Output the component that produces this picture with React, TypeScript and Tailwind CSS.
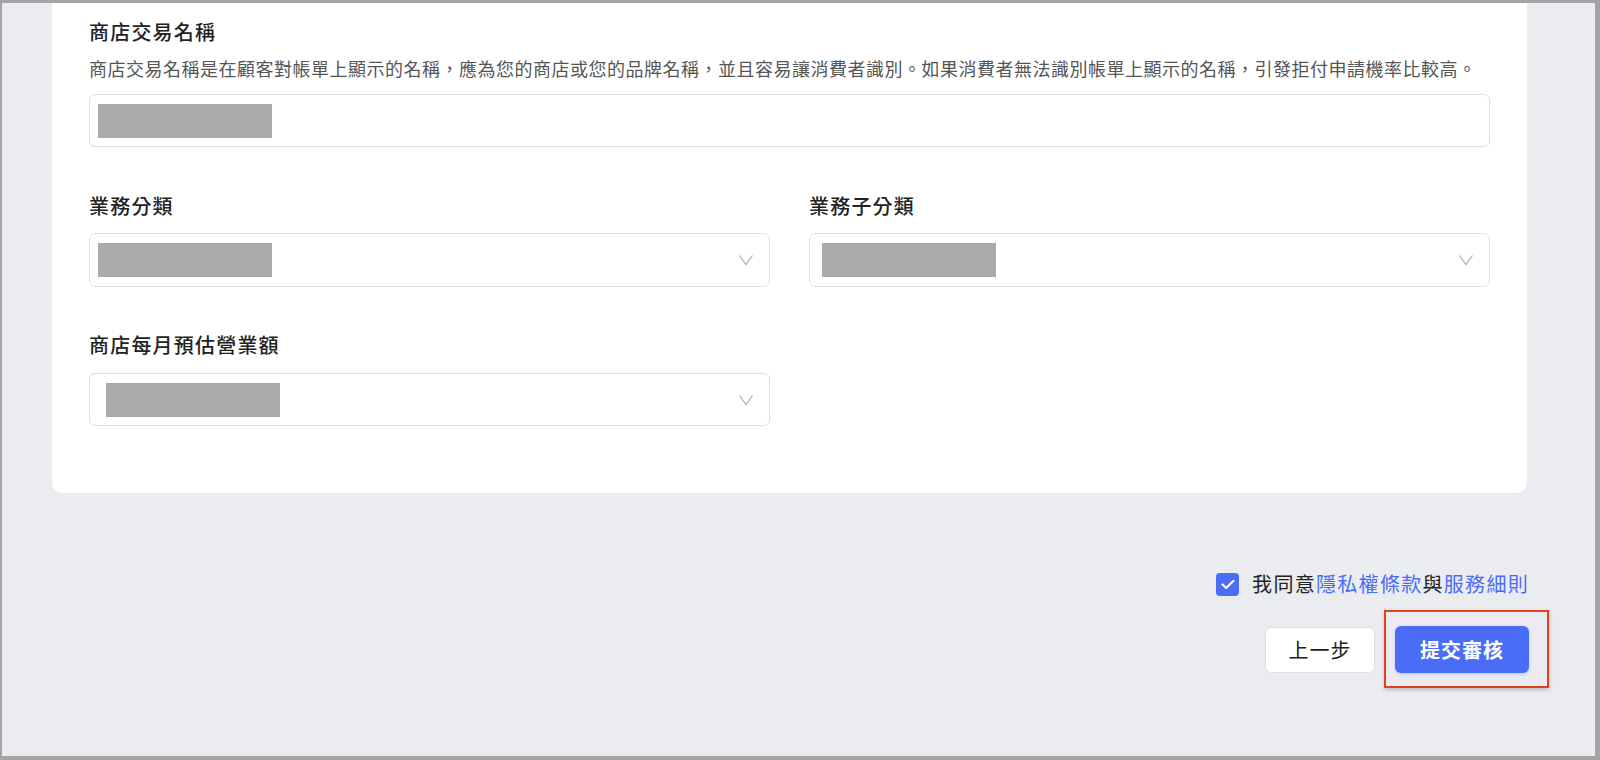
import React from "react";

const FONT = { fontFamily: '"Noto Sans CJK TC", "Noto Sans", sans-serif' };

function Chevron() {
  return (
    <svg width="16" height="12" viewBox="0 0 16 12" fill="none">
      <path d="M1.5 1.5 L8 10.5 L14.5 1.5" stroke="#a3a7b3" strokeWidth="1.1" />
    </svg>
  );
}

function Block() {
  return <div className="h-[34px] w-[174px] bg-[#aaaaaa]" />;
}

export default function App() {
  return (
    <div
      className="w-[1600px] h-[760px] bg-[#a4a4a7] pt-[3px] pl-[2px] pr-[5px] pb-[4px]"
      style={FONT}
    >
      <div className="h-full bg-[#ebecf0] overflow-hidden">
        <div className="ml-[50px] w-[1475px] bg-white rounded-b-[10px] px-[37px] pt-[15px] pb-[67px]">
          <div className="text-[20px] leading-[28px] font-medium tracking-[1.2px] text-[#222222]">
            商店交易名稱
          </div>
          <div className="mt-[8px] text-[18px] leading-[28px] tracking-[0.5px] text-[#555555]">
            商店交易名稱是在顧客對帳單上顯示的名稱，應為您的商店或您的品牌名稱，並且容易讓消費者識別。如果消費者無法識別帳單上顯示的名稱，引發拒付申請機率比較高。
          </div>
          <div className="mt-[12px] h-[53px] border border-[#dcdfe7] rounded-[6px] flex items-center pl-[8px]">
            <Block />
          </div>

          <div className="mt-[45px] grid grid-cols-2 gap-x-[39px]">
            <div>
              <div className="text-[20px] leading-[28px] font-medium tracking-[1.2px] text-[#222222]">
                業務分類
              </div>
              <div className="mt-[13px] h-[54px] border border-[#dcdfe7] rounded-[6px] flex items-center justify-between pr-[15px] pl-[8px]">
                <Block />
                <Chevron />
              </div>
            </div>
            <div>
              <div className="text-[20px] leading-[28px] font-medium tracking-[1.2px] text-[#222222]">
                業務子分類
              </div>
              <div className="mt-[13px] h-[54px] border border-[#dcdfe7] rounded-[6px] flex items-center justify-between pr-[15px] pl-[12px]">
                <Block />
                <Chevron />
              </div>
            </div>
            <div className="mt-[44px]">
              <div className="text-[20px] leading-[28px] font-medium tracking-[1.2px] text-[#222222]">
                商店每月預估營業額
              </div>
              <div className="mt-[14px] h-[53px] border border-[#dcdfe7] rounded-[6px] flex items-center justify-between pr-[15px] pl-[16px]">
                <Block />
                <Chevron />
              </div>
            </div>
          </div>
        </div>

        <div className="ml-[50px] w-[1477px] flex flex-col items-end">
          <div className="mt-[77px] h-[28px] flex items-center gap-[13px]">
            <div className="w-[23px] h-[23px] rounded-[4px] bg-[#4a6cf7] flex items-center justify-center">
              <svg width="14" height="11" viewBox="0 0 14 11" fill="none">
                <path d="M1.5 5.5 L5.2 9 L12.5 1.8" stroke="white" strokeWidth="2.2" strokeLinecap="round" strokeLinejoin="round" />
              </svg>
            </div>
            <div className="text-[20px] leading-[28px] tracking-[1.3px] text-[#222222]">
              我同意<span className="text-[#4a6cf7]">隱私權條款</span>與<span className="text-[#4a6cf7]">服務細則</span>
            </div>
          </div>
          <div className="mt-[28px] flex items-center gap-[20px]">
            <button className="w-[110px] h-[46px] bg-white border border-[#dcdfe7] rounded-[6px] text-[20px] tracking-[1px] text-[#222222]">
              上一步
            </button>
            <div className="relative">
              <button className="w-[134px] h-[47px] bg-[#4a6cf7] rounded-[6px] text-[20px] font-semibold tracking-[1px] text-white shadow-[0_1px_3px_rgba(74,108,247,0.35)]">
                提交審核
              </button>
              <div className="absolute left-[-11px] right-[-20px] top-[-16px] bottom-[-15px] border-2 border-[#e2431f] shadow-[0_2px_4px_rgba(0,0,0,0.2)] pointer-events-none" />
            </div>
          </div>
        </div>
      </div>
    </div>
  );
}
